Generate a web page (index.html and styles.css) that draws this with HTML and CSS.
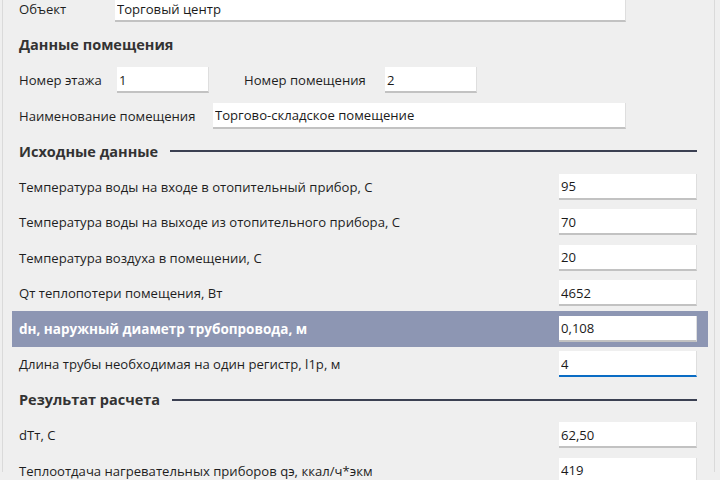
FILE: index.html
```html
<!DOCTYPE html>
<html lang="ru">
<head>
    <meta charset="UTF-8">
    <title>Расчет регистров</title>
    <link rel="stylesheet" href="styles.css">
</head>
<body>
<div class="window">
  <div class="panel">

    <div class="row">
      <span class="label w-obj">Объект</span>
      <input type="text" class="field f-obj" value="Торговый центр">
    </div>

    <div class="row heading"><span>Данные помещения</span></div>

    <div class="row">
      <span class="label w-floor">Номер этажа</span>
      <input type="text" class="field f-small" value="1">
      <span class="label w-room">Номер помещения</span>
      <input type="text" class="field f-small" value="2">
    </div>

    <div class="row">
      <span class="label w-name">Наименование помещения</span>
      <input type="text" class="field f-name" value="Торгово-складское помещение">
    </div>

    <div class="row heading"><span>Исходные данные</span><i class="rule"></i></div>

    <div class="row data">
      <span class="label">Температура воды на входе в отопительный прибор, С</span>
      <input type="text" class="field f-num" value="95">
    </div>
    <div class="row data">
      <span class="label">Температура воды на выходе из отопительного прибора, С</span>
      <input type="text" class="field f-num" value="70">
    </div>
    <div class="row data">
      <span class="label">Температура воздуха в помещении, С</span>
      <input type="text" class="field f-num" value="20">
    </div>
    <div class="row data">
      <span class="label">Qт теплопотери помещения, Вт</span>
      <input type="text" class="field f-num" value="4652">
    </div>
    <div class="row data selected">
      <span class="label">dн, наружный диаметр трубопровода, м</span>
      <input type="text" class="field f-num" value="0,108">
    </div>
    <div class="row data">
      <span class="label">Длина трубы необходимая на один регистр, l1р, м</span>
      <input type="text" class="field f-num focused" value="4">
    </div>

    <div class="row heading"><span>Результат расчета</span><i class="rule"></i></div>

    <div class="row data">
      <span class="label">dTт, С</span>
      <input type="text" class="field f-num" value="62,50">
    </div>
    <div class="row data">
      <span class="label">Теплоотдача нагревательных приборов qэ, ккал/ч*экм</span>
      <input type="text" class="field f-num" value="419">
    </div>

  </div>
</div>
</body>
</html>
```

FILE: styles.css
```css
html, body {
  margin: 0;
  height: 100%;
  overflow: hidden;
  background: #efefef;
}

body {
  font-family: "Open Sans", "Noto Sans", sans-serif;
  font-size: 13.1px;
  color: #1e1e1e;
}

.window {
  height: 100%;
  margin-left: 2px;
  width: 713px;
  border-left: 1px solid #dadada;
  border-right: 1px solid #dadada;
  box-sizing: border-box;
}

.panel {
  margin-top: -8.5px;
  margin-left: 9px;
  width: 696px;
}

.row {
  display: flex;
  align-items: center;
  height: 35.5px;
  padding: 0 11px 0 7px;
}

.label {
  white-space: nowrap;
}

.w-obj { width: 96px; }
.w-floor { width: 98px; }
.w-room { width: 141px; margin-left: 35px; }
.w-name { width: 194px; }

.data .label {
  flex: 1;
}

.field {
  box-sizing: border-box;
  height: 26px;
  margin: 0;
  padding: 1px 2px 0;
  font: inherit;
  color: #1a1a1a;
  background: #fff;
  border: none;
  border-bottom: 2px solid #c2c2c2;
  border-right: 1px solid #dedede;
  outline: none;
}

.f-obj { width: 511px; }
.f-small { width: 92px; }
.f-name { width: 413px; }
.f-num { width: 138px; }

.focused {
  border-bottom-color: #0a6cc4;
}

.heading {
  font-size: 14.5px;
  font-weight: bold;
  color: #333;
}

.heading .rule {
  flex: 1;
  height: 2px;
  margin-left: 12px;
  background: #3b4052;
}

.selected {
  background: #8d96b3;
}

.selected .label {
  color: #fff;
  font-weight: bold;
  font-size: 13.5px;
}
```
